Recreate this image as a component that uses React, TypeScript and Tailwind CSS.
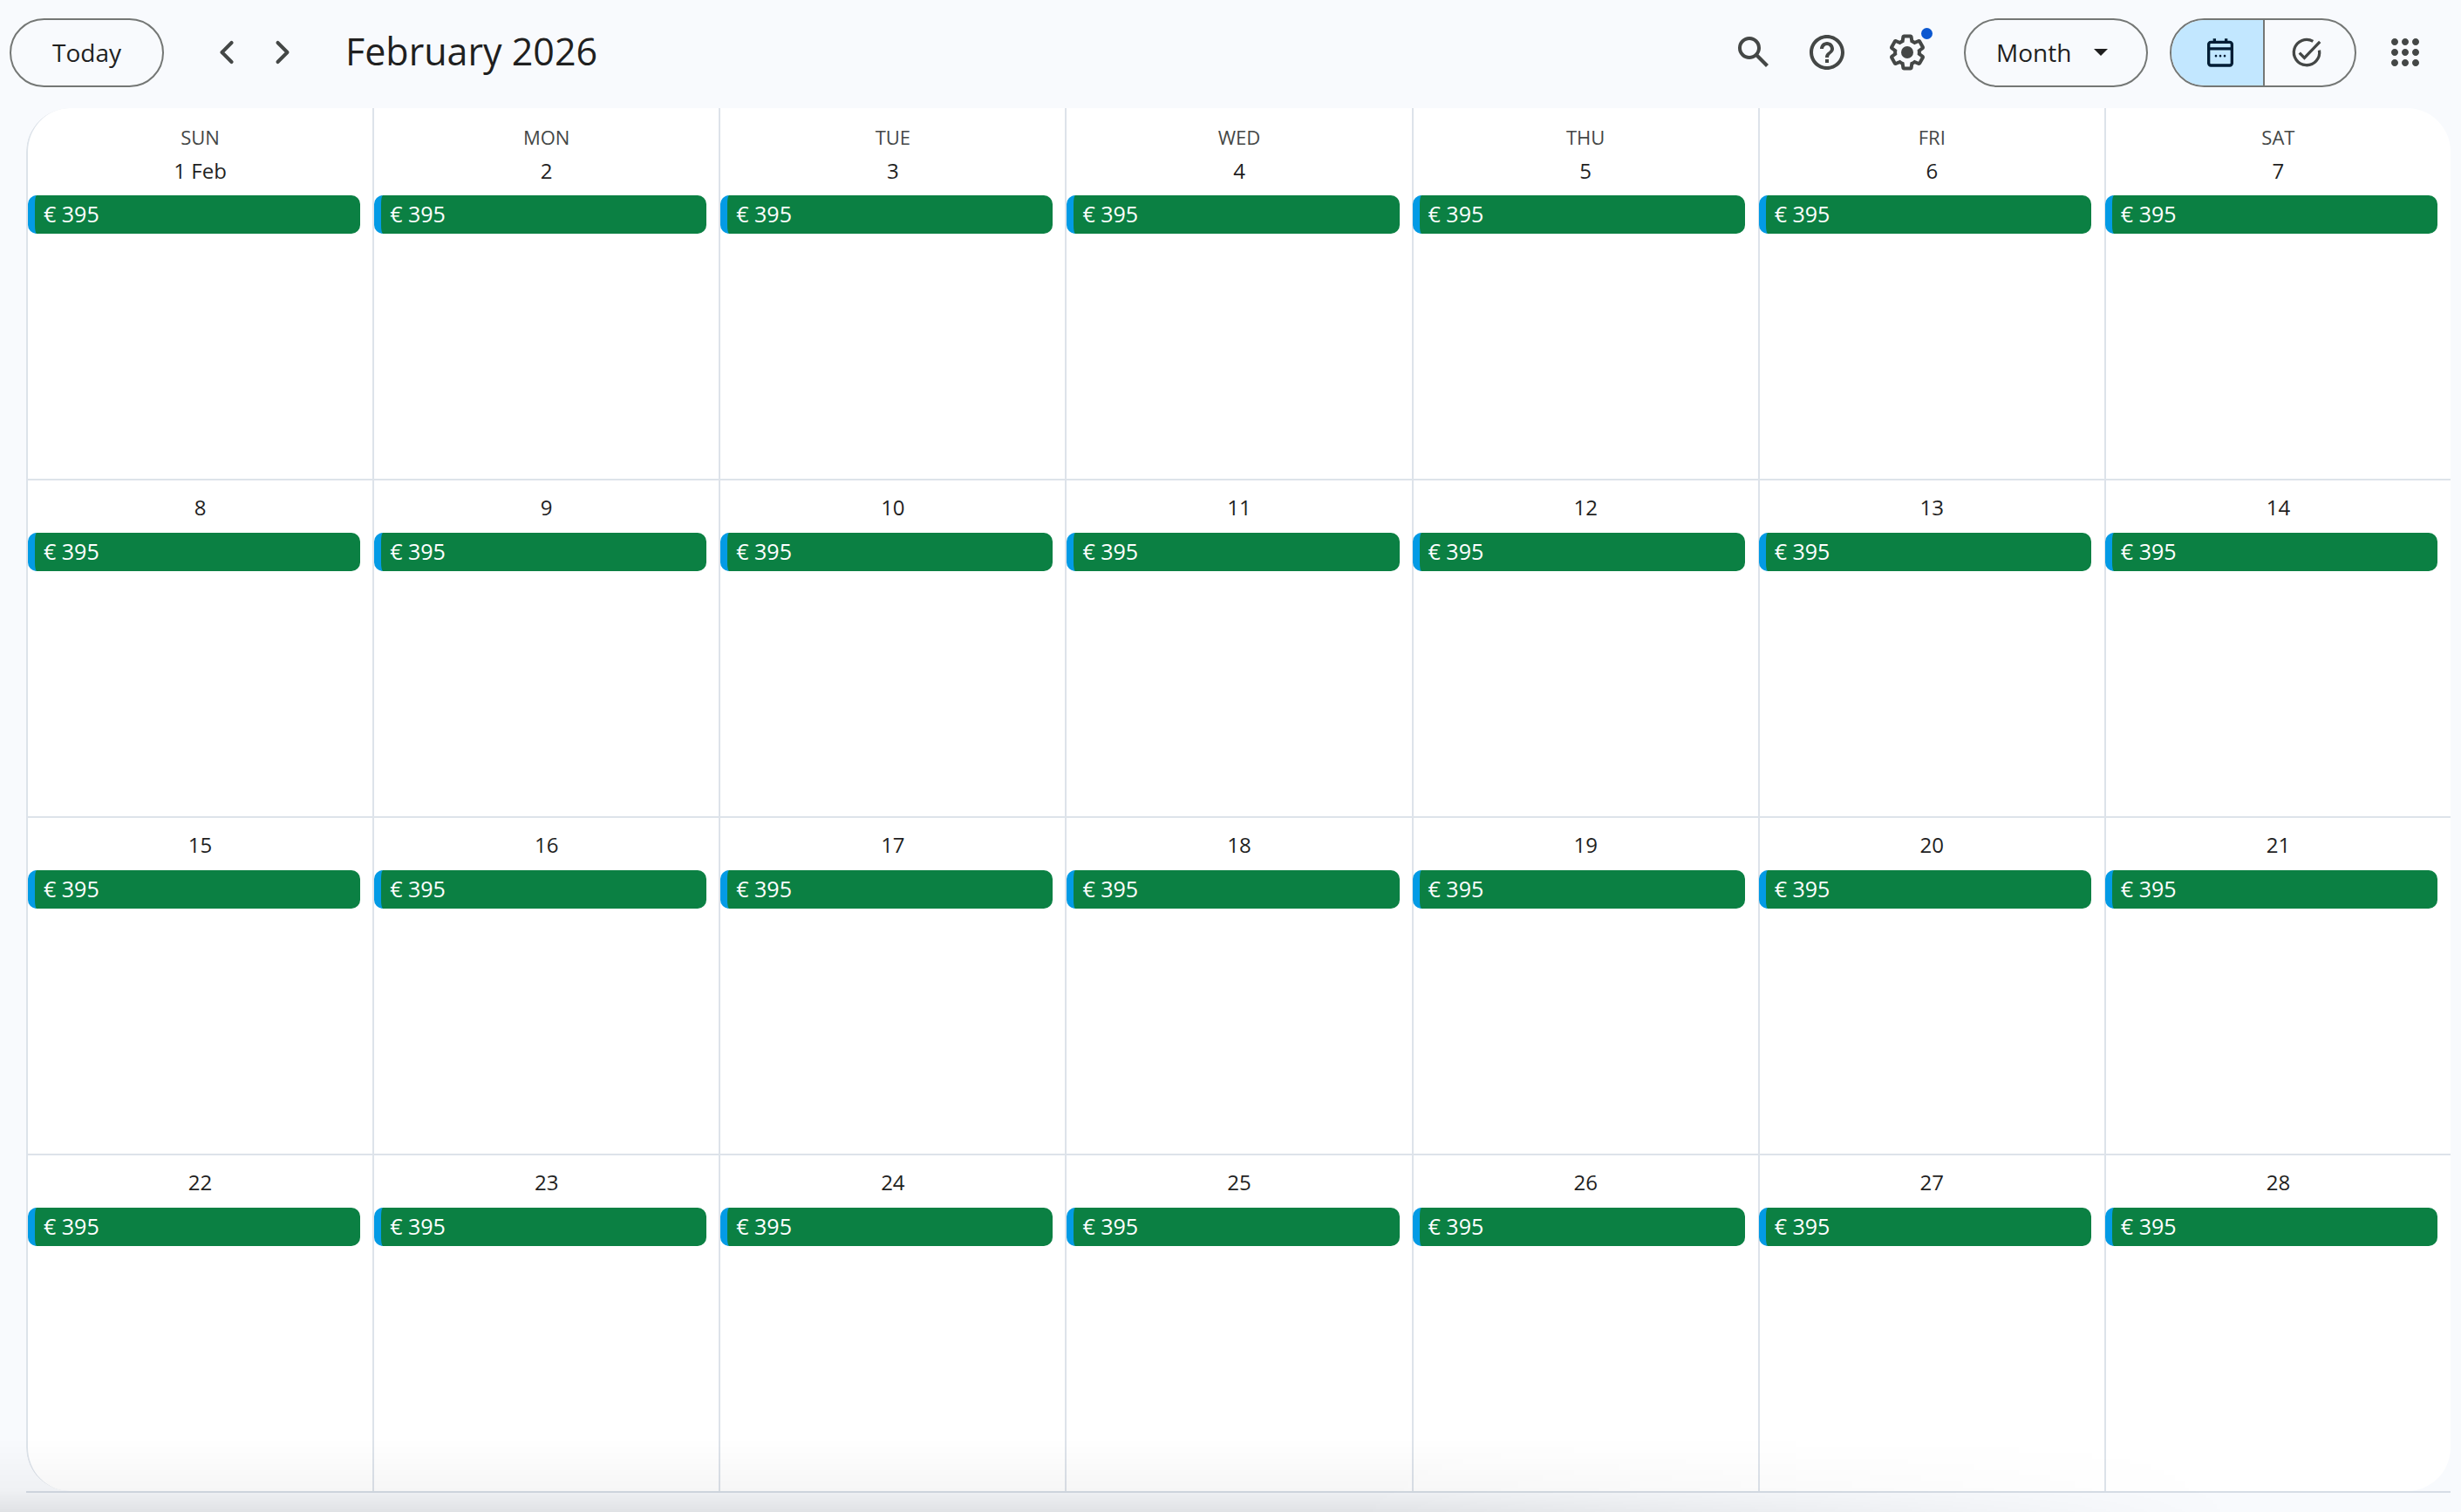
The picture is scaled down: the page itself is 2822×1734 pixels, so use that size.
import { ChevronLeft, ChevronRight } from 'lucide-react';

const days = ['SUN', 'MON', 'TUE', 'WED', 'THU', 'FRI', 'SAT'];
const dates = Array.from({ length: 28 }, (_, i) => i + 1);

function SearchIcon() {
  return (
    <svg width="48" height="48" viewBox="0 0 24 24" className="fill-[#444746]">
      <path d="M20.49 19l-5.73-5.73C15.53 12.2 16 10.91 16 9.5A6.5 6.5 0 1 0 9.5 16c1.41 0 2.7-.47 3.77-1.24L19 20.49 20.49 19zM5 9.5C5 7.01 7.01 5 9.5 5S14 7.01 14 9.5 11.99 14 9.5 14 5 11.99 5 9.5z" />
    </svg>
  );
}

function HelpIcon() {
  return (
    <svg width="48" height="48" viewBox="0 0 24 24" className="fill-[#444746]">
      <path d="M11 18h2v-2h-2v2zm1-16C6.48 2 2 6.48 2 12s4.48 10 10 10 10-4.48 10-10S17.52 2 12 2zm0 18c-4.41 0-8-3.59-8-8s3.59-8 8-8 8 3.59 8 8-3.59 8-8 8zm0-14c-2.21 0-4 1.79-4 4h2c0-1.1.9-2 2-2s2 .9 2 2c0 2-3 1.75-3 5h2c0-2.25 3-2.5 3-5 0-2.21-1.79-4-4-4z" />
    </svg>
  );
}

function GearIcon() {
  return (
    <svg width="48" height="48" viewBox="0 0 24 24" className="fill-[#444746]">
      <path d="M13.85 22.25h-3.7c-.74 0-1.36-.54-1.45-1.27l-.27-1.89c-.27-.14-.53-.29-.79-.46l-1.8.72c-.7.26-1.47-.03-1.81-.65L2.2 15.53c-.35-.66-.2-1.44.36-1.88l1.53-1.19c-.01-.15-.02-.3-.02-.46 0-.15.01-.31.02-.46l-1.52-1.19c-.59-.45-.74-1.26-.37-1.88l1.85-3.19c.34-.62 1.11-.9 1.79-.63l1.81.73c.26-.17.52-.32.78-.46l.27-1.91c.09-.7.71-1.26 1.44-1.26h3.7c.74 0 1.36.54 1.45 1.27l.27 1.89c.27.14.53.29.79.46l1.8-.72c.71-.26 1.48.03 1.82.65l1.84 3.18c.36.66.2 1.44-.36 1.88l-1.52 1.19c.01.15.02.3.02.46s-.01.31-.02.46l1.52 1.19c.56.45.72 1.23.37 1.86l-1.86 3.22c-.34.62-1.11.9-1.8.63l-1.8-.72c-.26.17-.52.32-.78.46l-.27 1.91c-.1.68-.72 1.22-1.46 1.22zm-3.23-2h2.76l.37-2.55.53-.22c.44-.18.88-.44 1.34-.78l.45-.34 2.38.96 1.38-2.4-2.03-1.58.07-.56c.03-.26.06-.51.06-.78s-.03-.53-.06-.78l-.07-.56 2.03-1.58-1.39-2.4-2.39.96-.45-.35c-.42-.32-.87-.58-1.33-.77l-.52-.22-.37-2.55h-2.76l-.37 2.55-.53.21c-.44.19-.88.44-1.34.79l-.45.33-2.38-.95-1.39 2.39 2.03 1.58-.07.56a7 7 0 0 0-.06.79c0 .26.02.53.06.78l.07.56-2.03 1.58 1.38 2.4 2.39-.96.45.35c.43.33.86.58 1.33.77l.53.22.38 2.55z" />
      <circle cx="12" cy="12" r="3.5" />
    </svg>
  );
}

function CalendarIcon() {
  return (
    <svg width="40" height="40" viewBox="0 0 24 24" fill="none" stroke="#001d35" strokeWidth="2">
      <rect x="4" y="5" width="16" height="16" rx="1.5" />
      <path d="M4 9.5h16" />
      <path d="M8 2.5v3M16 2.5v3" />
      <path d="M9 14.5h.01M12 14.5h.01M15 14.5h.01" strokeWidth="1.6" strokeLinecap="round" />
    </svg>
  );
}

function TaskIcon() {
  return (
    <svg width="44" height="44" viewBox="0 0 24 24" fill="none" stroke="#444746" strokeWidth="1.8">
      <path d="M19.9 10.7A8 8 0 1 1 16 5.1" />
      <path d="M7.5 12.3l3.1 3.2L20.3 5.4" />
    </svg>
  );
}

function AppsIcon() {
  return (
    <svg width="48" height="48" viewBox="0 0 24 24" className="fill-[#444746]">
      <path d="M6 8c1.1 0 2-.9 2-2s-.9-2-2-2-2 .9-2 2 .9 2 2 2zm6 12c1.1 0 2-.9 2-2s-.9-2-2-2-2 .9-2 2 .9 2 2 2zm-6 0c1.1 0 2-.9 2-2s-.9-2-2-2-2 .9-2 2 .9 2 2 2zm0-6c1.1 0 2-.9 2-2s-.9-2-2-2-2 .9-2 2 .9 2 2 2zm6 0c1.1 0 2-.9 2-2s-.9-2-2-2-2 .9-2 2 .9 2 2 2zm4-8c0 1.1.9 2 2 2s2-.9 2-2-.9-2-2-2-2 .9-2 2zm-4 2c1.1 0 2-.9 2-2s-.9-2-2-2-2 .9-2 2 .9 2 2 2zm6 6c1.1 0 2-.9 2-2s-.9-2-2-2-2 .9-2 2 .9 2 2 2zm0 6c1.1 0 2-.9 2-2s-.9-2-2-2-2 .9-2 2 .9 2 2 2z" />
    </svg>
  );
}

function DayCell({ date, index }: { date: number; index: number }) {
  const firstRow = index < 7;
  const lateColumn = index % 7 >= 4;
  return (
    <div className={`flex min-w-0 flex-col border-l-2 border-[#dde3ea] ${index < 21 ? 'border-b-2' : ''} ${index === 0 ? 'rounded-tl-[50px]' : ''} ${index === 21 ? 'rounded-bl-[50px]' : ''}`}>
      {firstRow && (
        <div className="mt-[19px] text-center text-[22px] leading-[28px] text-[#444746]">{days[index]}</div>
      )}
      <div className={`text-center text-[24px] leading-[32px] text-[#1f1f1f] ${firstRow ? 'mt-[9px]' : 'mt-[15px]'}`}>
        {date === 1 ? '1 Feb' : date}
      </div>
      <div className={`${firstRow ? 'mt-[12px]' : 'mt-[13px]'} ${lateColumn ? 'ml-[-1px] mr-[15px]' : 'mr-[14px]'} h-[44px] rounded-[10px] border-l-[8px] border-[#039be5] bg-[#0b8043] pl-[10px] text-[25px] leading-[43px] text-white`}>
        € 395
      </div>
    </div>
  );
}

export default function App() {
  return (
    <div className="relative h-[1734px] w-[2822px] overflow-hidden bg-[#f8fafd] font-['Open_Sans',sans-serif]">
      <header className="mb-[4px] flex h-[120px] items-center">
        <button className="ml-[11px] h-[79px] w-[177px] rounded-full border-2 border-[#747775] text-[28px] text-[#1f1f1f]">Today</button>
        <button className="ml-[48px] flex h-[48px] w-[48px] items-center justify-center text-[#444746]"><ChevronLeft size={44} strokeWidth={2.2} /></button>
        <button className="ml-[16px] flex h-[48px] w-[48px] items-center justify-center text-[#444746]"><ChevronRight size={44} strokeWidth={2.2} /></button>
        <h1 className="ml-[48px] pb-[2px] text-[43px] font-normal text-[#1f1f1f]">February 2026</h1>
        <div className="ml-auto flex items-center">
          <SearchIcon />
          <div className="ml-[36px]"><HelpIcon /></div>
          <div className="relative ml-[44px]">
            <GearIcon />
            <span className="absolute right-[-5px] top-[-4px] h-[13px] w-[13px] rounded-full bg-[#0b57d0]" />
          </div>
          <button className="ml-[41px] flex h-[79px] w-[211px] items-center rounded-full border-2 border-[#747775] pl-[35px] text-[28px] text-[#1f1f1f]">
            Month
            <span className="ml-[26px] h-0 w-0 border-x-[8px] border-t-[8px] border-x-transparent border-t-[#1f1f1f]" />
          </button>
          <div className="ml-[25px] flex h-[79px] w-[214px] overflow-hidden rounded-full border-2 border-[#747775]">
            <div className="flex w-[107px] items-center justify-center border-r-2 border-[#747775] bg-[#c2e7ff] pl-[7px]"><CalendarIcon /></div>
            <div className="flex flex-1 items-center justify-center pr-[8px]"><TaskIcon /></div>
          </div>
          <div className="ml-[32px] mr-[40px]"><AppsIcon /></div>
        </div>
      </header>
      <main className="ml-[30px] mr-[12px] border-b-2 border-[#d6dde6]">
        <div className="grid h-[1586px] grid-cols-7 grid-rows-[427px_387px_387px_1fr] overflow-hidden rounded-[50px] bg-white">
          {dates.map((d, i) => (
            <DayCell key={d} date={d} index={i} />
          ))}
        </div>
      </main>
      <div className="pointer-events-none absolute bottom-0 left-0 h-[84px] w-full bg-[linear-gradient(to_top,rgba(0,0,0,0.095),rgba(0,0,0,0.035)_30%,rgba(0,0,0,0))] [mask-image:linear-gradient(to_right,black_55%,transparent_91%)]" />
    </div>
  );
}
